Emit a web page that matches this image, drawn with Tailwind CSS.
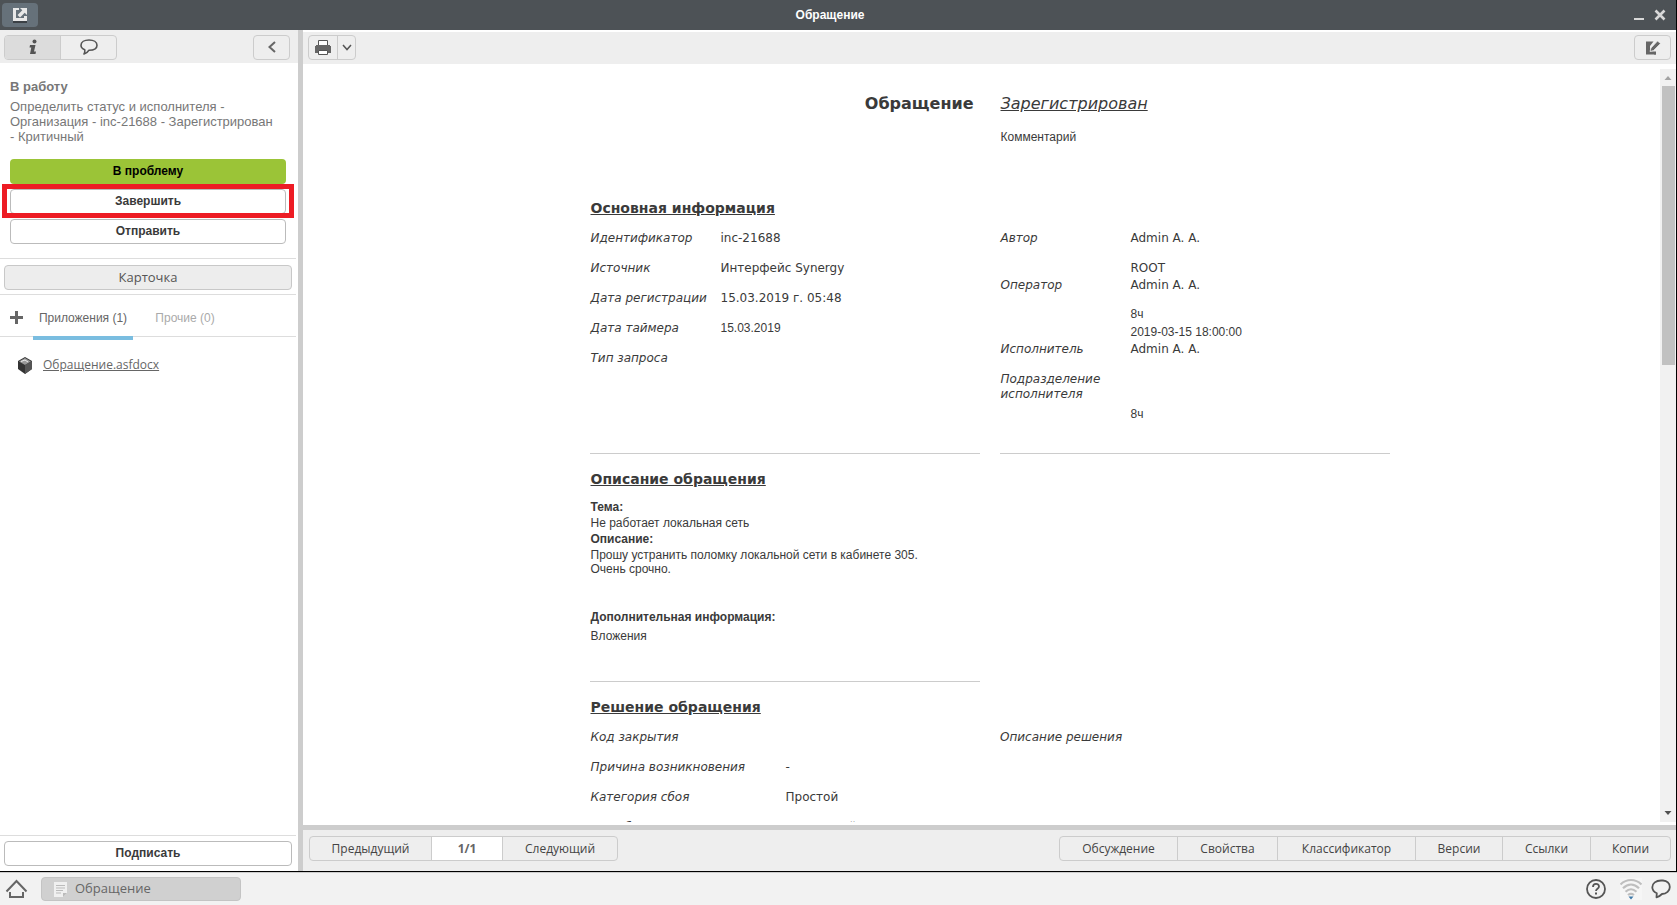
<!DOCTYPE html>
<html lang="ru">
<head>
<meta charset="utf-8">
<title>Обращение</title>
<script src="https://cdn.jsdelivr.net/npm/@tailwindcss/browser@4"></script>
</head>
<body class="flex h-screen flex-col overflow-hidden bg-white font-['Liberation_Sans',sans-serif] text-[12px] text-[#3a3a3a]">

<div class="flex min-h-0 flex-1 flex-col border-r border-b border-black">
  <header class="flex h-[30px] shrink-0 items-center bg-[#4d5256] pr-[10px] pl-[2px] text-white">
    <div class="flex flex-1">
      <button aria-label="Открыть в окне" class="flex h-6 w-9 items-center justify-center rounded bg-[#66717a]">
        <svg width="16" height="16" viewBox="0 0 16 16"><path d="M1 1h6v2H4v8h8V9h3v5H1z" fill="#e8e8e8"/><path d="M8 1h7v7l-2.300-2.300L8 10.400 5.600 8l4.700-4.700z" fill="#e8e8e8"/><path d="M1 15h14" stroke="#111"/></svg>
      </button>
    </div>
    <h1 class="pr-2 font-bold">Обращение</h1>
    <div class="flex flex-1 items-center justify-end gap-[10px]">
      <button aria-label="Свернуть" class="flex"><svg width="10" height="12" viewBox="0 0 10 12"><path d="M0 10h10" stroke="#d8d8d8" stroke-width="2"/></svg></button>
      <button aria-label="Закрыть" class="flex"><svg width="12" height="12" viewBox="0 0 12 12"><path d="M1.500 1.500l9 9M10.500 1.500l-9 9" stroke="#d8d8d8" stroke-width="2.600"/></svg></button>
    </div>
  </header>

  <div class="flex min-h-0 flex-1">
    <aside class="flex w-[298px] shrink-0 flex-col">
      <div class="flex h-[33px] shrink-0 items-center justify-between bg-[#eee] pt-px pr-2 pl-1">
        <div class="flex h-[25px] w-[113px] overflow-hidden rounded border border-[#ccc]">
          <button aria-label="Информация" class="flex flex-1 items-center justify-center border-r border-[#ccc] bg-[#dcdcdc]">
            <svg width="10" height="16" viewBox="0 0 10 16" fill="#555"><circle cx="6.500" cy="2.500" r="2"/><path d="M2 6h5.500L6 12.500h2L7.500 15H2l1.300-6.500H1.500z"/></svg>
          </button>
          <button aria-label="Комментарии" class="flex flex-1 items-center justify-center">
            <svg width="18" height="16" viewBox="0 0 18 16" fill="none" stroke="#555" stroke-width="1.600"><path d="M9 1c4.600 0 8 2 8 5.200s-3.400 5-8 5c-1 1.800-2.500 3-5 3.800.8-1.300 1-2.500.7-4.300C2.500 9.800 1 8.300 1 6.200 1 3 4.400 1 9 1z" stroke-linejoin="round"/></svg>
          </button>
        </div>
        <button aria-label="Скрыть панель" class="flex h-[25px] w-[37px] items-center justify-center rounded border border-[#ccc]">
          <svg width="10" height="12" viewBox="0 0 10 12" fill="none" stroke="#666" stroke-width="2"><path d="M8 1L2.500 6 8 11"/></svg>
        </button>
      </div>

      <div class="px-[10px] pt-4 text-[13px] leading-[15px] text-[#777]">
        <h2 class="leading-4 font-bold">В работу</h2>
        <p class="mt-1">Определить статус и исполнителя -<br>Организация - inc-21688 - Зарегистрирован<br>- Критичный</p>
      </div>
      <div class="mt-[15px] flex flex-col gap-[5px] pr-3 pl-[10px] font-bold">
        <button class="h-[25px] rounded bg-[#9bc437] pb-px text-black">В проблему</button>
        <div class="relative flex">
          <button class="h-[25px] flex-1 rounded border border-[#bbb] pb-px">Завершить</button>
          <span class="pointer-events-none absolute -inset-x-2 -top-[5px] -bottom-1 border-[5px] border-[#ed1c24]"></span>
        </div>
        <button class="h-[25px] rounded border border-[#bbb] pb-px">Отправить</button>
      </div>
      <div class="mt-[14px] mr-[2px] border-y border-[#ddd] pt-[6px] pr-1 pb-1 pl-1">
        <button class="h-[25px] w-full rounded border border-[#c8c8c8] bg-[#ededed] font-['Open_Sans',sans-serif] text-[13px] text-[#555]">Карточка</button>
      </div>
      <div class="mr-[2px] flex h-[42px] shrink-0 items-stretch border-b border-[#ddd]">
        <button aria-label="Добавить" class="flex w-[33px] items-center pt-1 pl-[10px]"><svg width="13" height="13" viewBox="0 0 13 13"><path d="M6.500 0v13M0 6.500h13" stroke="#666" stroke-width="3"/></svg></button>
        <button class="relative w-[100px] pt-1 text-[#666]">Приложения (1)<span class="absolute inset-x-0 top-[41px] h-1 bg-[#7abde0]"></span></button>
        <button class="w-[104px] pt-1 text-[#aaa]">Прочие (0)</button>
      </div>
      <div class="flex items-center gap-[11px] pt-[19px] pl-[18px]">
        <svg width="14" height="17" viewBox="0 0 14 17"><path d="M7 0l7 4v8l-7 5-7-5V4z" fill="#333"/><path d="M7 1l6 3.500L7 8 1 4.500z" fill="#999"/><path d="M3 4.500L7 3l3 2" stroke="#eee" fill="none"/><path d="M7 8l7-4v8l-7 5z" fill="#555"/></svg>
        <a href="#" class="font-['Open_Sans',sans-serif] text-[12px] leading-[18px] text-[#666] underline">Обращение.asfdocx</a>
      </div>
      <div class="mt-auto mr-[2px] flex border-t border-[#ddd] px-1 pt-[5px] pb-[5px]">
        <button class="h-[25px] flex-1 rounded border border-[#bbb] pb-px font-bold">Подписать</button>
      </div>
    </aside>

    <div class="w-[5px] shrink-0 bg-[#cdcdcd]"></div>

    <main class="flex min-w-0 flex-1 flex-col">
      <div class="mt-[2px] flex h-8 shrink-0 items-center justify-between bg-[#eee] pr-[5px] pb-px pl-[5px]">
        <div class="flex h-[25px] rounded border border-[#ccc]">
          <button aria-label="Печать" class="flex w-[29px] items-center justify-center border-r border-[#ccc]">
            <svg width="16" height="16" viewBox="0 0 16 16"><path d="M3.500 6V.5h9V6" fill="#fff" stroke="#555"/><path d="M0 6h1V5h14v1h1v7h-3v-2H3v2H0z" fill="#666"/><path d="M3.500 10.500h9v4h-9z" fill="#fff" stroke="#555"/></svg>
          </button>
          <button aria-label="Варианты печати" class="flex w-[17px] items-center justify-center"><svg width="10" height="7" viewBox="0 0 10 7" fill="none" stroke="#555" stroke-width="1.500"><path d="M1 1l4 4.500L9 1"/></svg></button>
        </div>
        <button aria-label="Редактировать" class="flex h-[25px] w-[37px] items-center justify-center rounded border border-[#ccc]">
          <svg width="16" height="14" viewBox="0 0 16 14"><path d="M1 .5h7.500L5 5v5.500h4V13h2v.5H1z" fill="#666"/><path d="M9 10.500h2v3H9z" fill="#666"/><path d="M12.500 0L15.500 2.500 8.500 9.500 5 10.500 6 7z" fill="#666" stroke="#eee" stroke-width=".7"/></svg>
        </button>
      </div>

      <div class="mt-[5px] mb-[3px] flex min-h-0 flex-1">
        <div class="min-w-0 flex-1 overflow-hidden pl-4 font-['DejaVu_Sans',sans-serif] leading-[15px]">
          <article class="mx-auto w-full max-w-[800px]">
            <div class="grid h-[122px] grid-cols-2 gap-x-5 pt-[25px]">
              <h2 class="pr-[6px] text-right text-[16px] leading-5 font-bold">Обращение</h2>
              <div class="pl-px">
                <p class="text-[16px] leading-5 italic underline">Зарегистрирован</p>
                <p class="mt-4 font-['Liberation_Sans',sans-serif]">Комментарий</p>
              </div>
            </div>

            <section>
              <h3 class="pt-2 pl-px text-[14px] leading-[18px] font-bold underline">Основная информация</h3>
              <div class="mt-[13px] grid grid-cols-2 gap-x-5">
                <dl class="grid h-[224px] grid-cols-[130px_1fr] content-start gap-y-[15px] border-b border-[#ccc] pt-px pl-px">
                  <dt class="italic">Идентификатор</dt><dd>inc-21688</dd>
                  <dt class="italic">Источник</dt><dd>Интерфейс Synergy</dd>
                  <dt class="italic">Дата регистрации</dt><dd>15.03.2019 г. 05:48</dd>
                  <dt class="italic">Дата таймера</dt><dd class="font-['Liberation_Sans',sans-serif]">15.03.2019</dd>
                  <dt class="italic">Тип запроса</dt><dd></dd>
                </dl>
                <dl class="grid h-[224px] grid-cols-[130px_1fr] content-start border-b border-[#ccc] pt-px pl-px">
                  <dt class="italic">Автор</dt><dd>Admin A. A.</dd>
                  <dd class="col-start-2 mt-[15px] mb-[2px]">ROOT</dd>
                  <dt class="italic">Оператор</dt><dd>Admin A. A.</dd>
                  <dd class="col-start-2 mt-[14px] mb-[3px] font-['Liberation_Sans',sans-serif]">8ч</dd>
                  <dd class="col-start-2 mb-[2px] font-['Liberation_Sans',sans-serif]">2019-03-15 18:00:00</dd>
                  <dt class="italic">Исполнитель</dt><dd>Admin A. A.</dd>
                  <dt class="mt-[15px] italic">Подразделение исполнителя</dt><dd></dd>
                  <dd class="col-start-2 mt-[5px] font-['Liberation_Sans',sans-serif]">8ч</dd>
                </dl>
              </div>
            </section>

            <section class="grid grid-cols-2 gap-x-5">
              <div class="h-[228px] border-b border-[#ccc] pl-px font-['Liberation_Sans',sans-serif]">
                <h3 class="pt-4 font-['DejaVu_Sans',sans-serif] text-[14px] leading-[18px] font-bold underline">Описание обращения</h3>
                <h4 class="mt-[11px] leading-4 font-bold">Тема:</h4>
                <p class="leading-4">Не работает локальная сеть</p>
                <h4 class="leading-4 font-bold">Описание:</h4>
                <p class="mt-px leading-[14px]">Прошу устранить поломку локальной сети в кабинете 305.<br>Очень срочно.</p>
                <h4 class="mt-[33px] leading-4 font-bold">Дополнительная информация:</h4>
                <p class="mt-[3px] leading-4">Вложения</p>
              </div>
            </section>

            <section class="pl-px">
              <h3 class="pt-4 text-[14px] leading-[18px] font-bold underline">Решение обращения</h3>
              <div class="mt-[14px] grid grid-cols-2 gap-x-5">
                <dl class="grid grid-cols-[195px_1fr] content-start gap-y-[15px]">
                  <dt class="italic">Код закрытия</dt><dd></dd>
                  <dt class="italic">Причина возникновения</dt><dd>-</dd>
                  <dt class="italic">Категория сбоя</dt><dd>Простой</dd>
                  <dt class="italic">Тип сбоя</dt><dd>Критичный</dd>
                </dl>
                <dl><dt class="italic">Описание решения</dt></dl>
              </div>
            </section>
          </article>
        </div>
        <div class="flex w-4 shrink-0 flex-col items-center bg-[#f1f1f1]">
          <svg class="shrink-0" width="16" height="17" viewBox="0 0 16 17"><path d="M4.500 11h7L8 7z" fill="#a3a3a3"/></svg>
          <div class="h-[37%] w-[13px] bg-[#c1c1c1]"></div>
          <svg class="mt-auto shrink-0" width="16" height="17" viewBox="0 0 16 17"><path d="M4.500 6h7L8 10z" fill="#505050"/></svg>
        </div>
      </div>

      <footer class="flex shrink-0 items-start justify-between border-t-[5px] border-[#cdcdcd] bg-[#eee] pt-[6px] pr-[5px] pb-[10px] pl-[6px] font-['Open_Sans',sans-serif] text-[12px] text-[#444]">
        <nav class="flex h-[25px] overflow-hidden rounded border border-[#ccc]">
          <button class="w-[121px]">Предыдущий</button>
          <span class="flex w-[72px] items-center justify-center border-x border-[#ccc] bg-white font-bold text-[#666]">1/1</span>
          <button class="w-[114px]">Следующий</button>
        </nav>
        <nav class="flex h-[25px] divide-x divide-[#ccc] rounded border border-[#ccc]">
          <button class="w-[118px]">Обсуждение</button>
          <button class="w-[100px]">Свойства</button>
          <button class="w-[138px]">Классификатор</button>
          <button class="w-[87px]">Версии</button>
          <button class="w-[88px]">Ссылки</button>
          <button class="w-[79px]">Копии</button>
        </nav>
      </footer>
    </main>
  </div>
</div>

<div class="flex h-[33px] shrink-0 items-center justify-between border-t border-[#ccc] bg-[#f2f2f2] pr-[6px] pl-[5px]">
  <div class="flex items-center gap-[13px]">
    <a href="#" aria-label="Домой" class="flex"><svg width="23" height="20" viewBox="0 0 23 20" fill="none" stroke="#666" stroke-width="2"><path d="M1.500 12.500L11.500 2l10 10.500M5 13v5h13v-5"/></svg></a>
    <button class="flex h-6 w-[200px] items-center gap-2 rounded border border-[#c4c4c4] bg-[#d0d0d0] pl-3 font-['Open_Sans',sans-serif] text-[13px] text-[#666]">
      <svg width="13" height="15" viewBox="0 0 13 15"><path d="M0 0h13v11l-4 4H0z" fill="#f0f0f0"/><path d="M2 3.500h9M2 6h9M2 8.500h7M2 11h5" stroke="#bbb"/><path d="M9 15v-4h4z" fill="#bbb"/></svg>
      Обращение
    </button>
  </div>
  <div class="flex items-center">
    <button aria-label="Справка" class="mr-[14px] flex"><svg width="20" height="20" viewBox="0 0 20 20" fill="none" stroke="#555"><circle cx="10" cy="10" r="9" stroke-width="1.800"/><path d="M7 8c0-4 6-4 6-.5 0 2.300-3 2.300-3 4.500" stroke-width="1.800"/><path d="M10 13.500v2" stroke-width="2"/></svg></button>
    <span class="mr-[9px] flex bg-[#f6f6f6]"><svg width="22" height="22" viewBox="0 0 22 22" fill="none" stroke="#bfbfbf" stroke-width="2.200"><path d="M.5 6.500c6-6 15-6 21 0M3 10.300c5-5 11-5 16 0M5.500 13.800c4-3.600 7-3.600 11 0M8 17c2-1.600 4-1.600 6 0"/><path d="M8.500 18.500h5L11 21.500z" fill="#3c78a8" stroke="none"/></svg></span>
    <button aria-label="Чат" class="flex"><svg width="20" height="20" viewBox="0 0 20 20" fill="none" stroke="#555" stroke-width="1.800" stroke-linejoin="round"><path d="M10 1.500h2c4 .3 6.800 2.800 6.800 6.500S15.500 15 11 15c-1.500 1.500-3.500 2.800-5.500 3.300l.3-4C3 13 1.300 11 1.300 8.300c0-4 3.700-6.800 8.700-6.800z"/></svg></button>
  </div>
</div>
</body>
</html>
